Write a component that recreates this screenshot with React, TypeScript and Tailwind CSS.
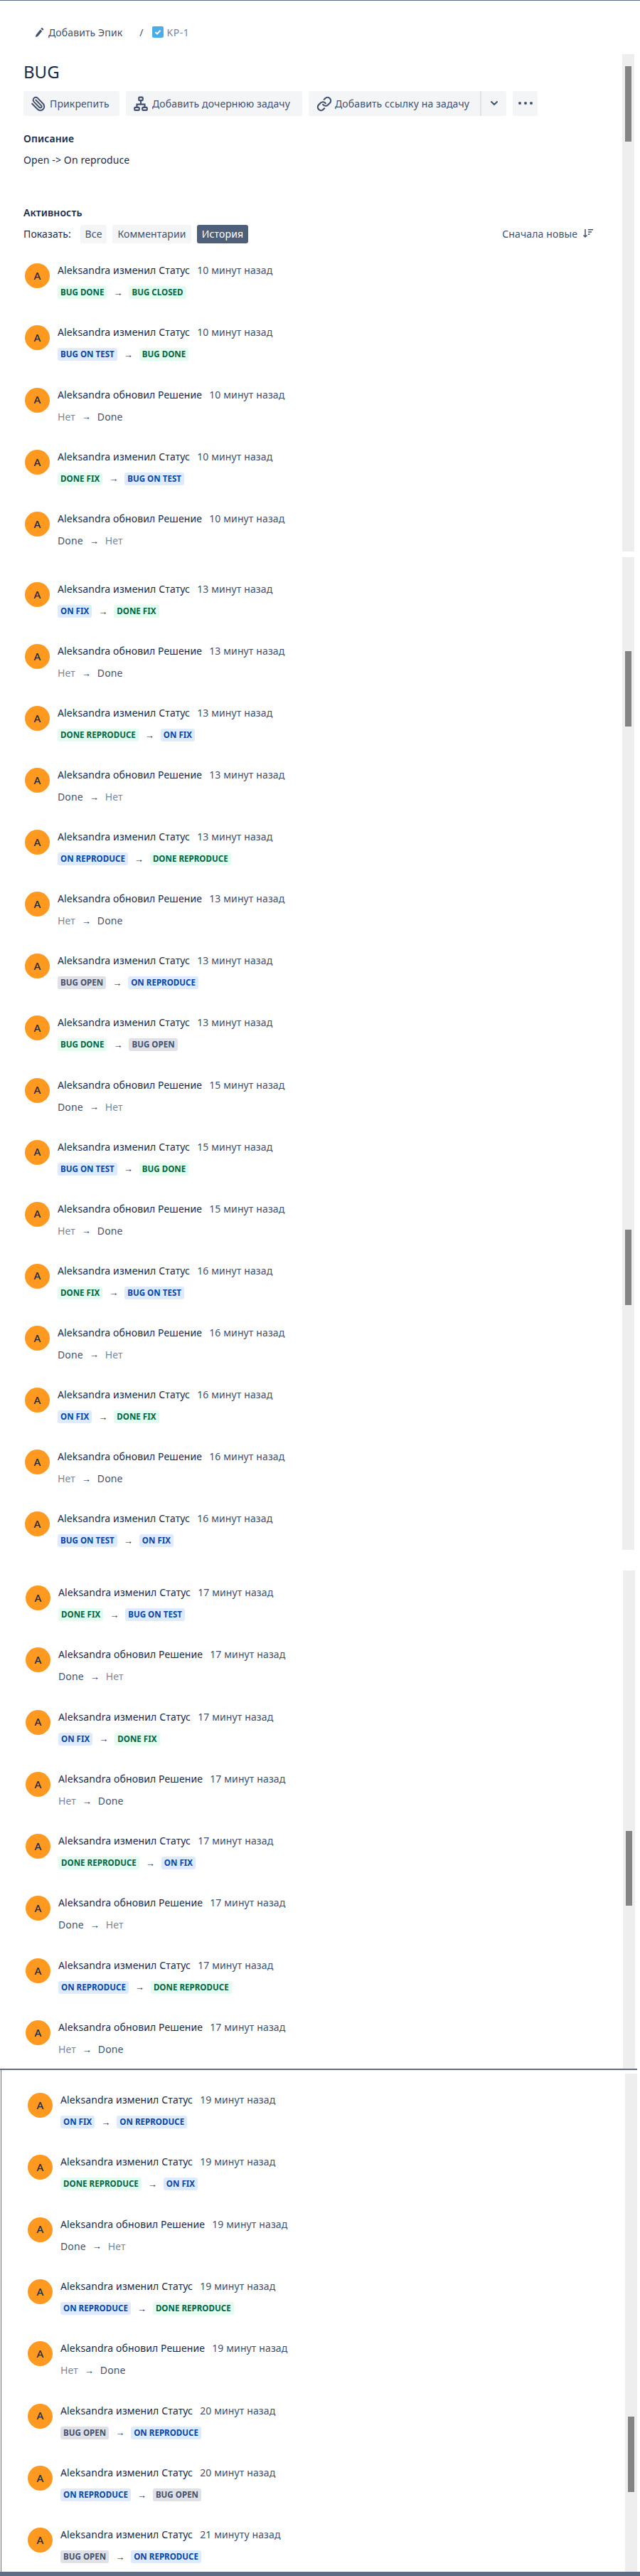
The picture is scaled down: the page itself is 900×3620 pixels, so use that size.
import { ChevronDown, Link, Paperclip } from 'lucide-react'

type Row = { kind: 'status' | 'res'; time: string; from: string; to: string }

const st = (time: string, from: string, to: string): Row => ({ kind: 'status', time, from, to })
const rs = (time: string, from: string, to: string): Row => ({ kind: 'res', time, from, to })

const first: Row[] = [
  st('10 минут назад', 'BUG DONE', 'BUG CLOSED'),
  st('10 минут назад', 'BUG ON TEST', 'BUG DONE'),
  rs('10 минут назад', 'Нет', 'Done'),
  st('10 минут назад', 'DONE FIX', 'BUG ON TEST'),
  rs('10 минут назад', 'Done', 'Нет'),
]

const second: Row[] = [
  st('13 минут назад', 'ON FIX', 'DONE FIX'),
  rs('13 минут назад', 'Нет', 'Done'),
  st('13 минут назад', 'DONE REPRODUCE', 'ON FIX'),
  rs('13 минут назад', 'Done', 'Нет'),
  st('13 минут назад', 'ON REPRODUCE', 'DONE REPRODUCE'),
  rs('13 минут назад', 'Нет', 'Done'),
  st('13 минут назад', 'BUG OPEN', 'ON REPRODUCE'),
  st('13 минут назад', 'BUG DONE', 'BUG OPEN'),
  rs('15 минут назад', 'Done', 'Нет'),
  st('15 минут назад', 'BUG ON TEST', 'BUG DONE'),
  rs('15 минут назад', 'Нет', 'Done'),
  st('16 минут назад', 'DONE FIX', 'BUG ON TEST'),
  rs('16 минут назад', 'Done', 'Нет'),
  st('16 минут назад', 'ON FIX', 'DONE FIX'),
  rs('16 минут назад', 'Нет', 'Done'),
  st('16 минут назад', 'BUG ON TEST', 'ON FIX'),
]

const third: Row[] = [
  st('17 минут назад', 'DONE FIX', 'BUG ON TEST'),
  rs('17 минут назад', 'Done', 'Нет'),
  st('17 минут назад', 'ON FIX', 'DONE FIX'),
  rs('17 минут назад', 'Нет', 'Done'),
  st('17 минут назад', 'DONE REPRODUCE', 'ON FIX'),
  rs('17 минут назад', 'Done', 'Нет'),
  st('17 минут назад', 'ON REPRODUCE', 'DONE REPRODUCE'),
  rs('17 минут назад', 'Нет', 'Done'),
]

const fourth: Row[] = [
  st('19 минут назад', 'ON FIX', 'ON REPRODUCE'),
  st('19 минут назад', 'DONE REPRODUCE', 'ON FIX'),
  rs('19 минут назад', 'Done', 'Нет'),
  st('19 минут назад', 'ON REPRODUCE', 'DONE REPRODUCE'),
  rs('19 минут назад', 'Нет', 'Done'),
  st('20 минут назад', 'BUG OPEN', 'ON REPRODUCE'),
  st('20 минут назад', 'ON REPRODUCE', 'BUG OPEN'),
  st('21 минуту назад', 'BUG OPEN', 'ON REPRODUCE'),
]

function lozengeClass(name: string) {
  if (name === 'BUG OPEN') return 'bg-[#dfe1e6] text-[#42526e]'
  if (name.startsWith('ON') || name === 'BUG ON TEST') return 'bg-[#deebff] text-[#0747a6]'
  return 'bg-[#e3fcef] text-[#006644]'
}

function Lozenge({ name }: { name: string }) {
  return (
    <span className={`h-[18px] px-1 rounded-[3px] text-[11.6px] tracking-normal leading-[18px] font-bold ${lozengeClass(name)}`}>
      {name}
    </span>
  )
}

function Resolution({ value }: { value: string }) {
  return <span className={value === 'Нет' ? 'text-[#7a869a]' : 'text-[#42526e]'}>{value}</span>
}

function HistoryRow({ row }: { row: Row }) {
  return (
    <div className="flex h-[54px] gap-[11px]">
      <div className="w-[35px] h-[35px] rounded-full bg-[#ff991f] flex items-center justify-center text-[15px] font-medium text-[#172b4d]">
        A
      </div>
      <div>
        <div className="h-5 leading-5 text-[#172b4d] whitespace-nowrap">
          Aleksandra {row.kind === 'status' ? 'изменил Статус' : 'обновил Решение'}
          <span className="ml-[10px] text-[#42526e]">{row.time}</span>
        </div>
        <div className="mt-[12px] h-[18px] flex items-center">
          {row.kind === 'status' ? <Lozenge name={row.from} /> : <Resolution value={row.from} />}
          <span className="w-[31px] text-center text-[#172b4d] text-[13px]">→</span>
          {row.kind === 'status' ? <Lozenge name={row.to} /> : <Resolution value={row.to} />}
        </div>
      </div>
    </div>
  )
}

function Track({ children, className = '' }: { children: React.ReactNode; className?: string }) {
  return <aside className={`w-[17px] shrink-0 bg-[#eeeeee] ${className}`}>{children}</aside>
}

function Actions() {
  return (
    <div className="mt-[16px] flex gap-[9px] text-[#42526e]">
      <button className="h-[35px] w-[135px] pl-[10px] flex items-center gap-[5px] bg-[#f4f5f7] rounded-[3px]">
        <Paperclip className="w-[22px] h-[22px] -scale-x-100" strokeWidth={2.2} />
        Прикрепить
      </button>
      <button className="h-[35px] w-[248px] pl-[10px] flex items-center gap-[5px] bg-[#f4f5f7] rounded-[3px]">
        <svg viewBox="0 0 20 20" className="w-[22px] h-[22px]" fill="none" stroke="currentColor" strokeWidth="2">
          <rect x="7.5" y="1.5" width="5" height="4" rx="1" />
          <rect x="2" y="14.5" width="6" height="3.5" rx="1" />
          <rect x="12" y="14.5" width="6" height="3.5" rx="1" />
          <path d="M10 5.5v5M5 14v-3.5h10V14" />
        </svg>
        Добавить дочернюю задачу
      </button>
      <div className="h-[35px] flex bg-[#f4f5f7] rounded-[3px]">
        <button className="w-[243px] pl-[11px] flex items-center gap-[4px] border-r-2 border-[#dfe1e6]">
          <Link className="w-[22px] h-[22px]" strokeWidth={2.4} />
          Добавить ссылку на задачу
        </button>
        <button className="w-[35px] flex items-center justify-center">
          <ChevronDown className="w-4 h-4 -mt-px" strokeWidth={3} />
        </button>
      </div>
      <button className="h-[35px] w-[35px] flex items-center justify-center gap-[4px] bg-[#f4f5f7] rounded-[3px]">
        <span className="w-1 h-1 -mt-px rounded-full bg-[#42526e]" />
        <span className="w-1 h-1 -mt-px rounded-full bg-[#42526e]" />
        <span className="w-1 h-1 -mt-px rounded-full bg-[#42526e]" />
      </button>
    </div>
  )
}

function Header() {
  return (
    <>
      <h1 className="h-[36px] pt-[7px] text-2xl tracking-normal leading-[36px] text-[#172b4d]">BUG</h1>
      <Actions />
      <h2 className="mt-[22px] h-5 leading-5 font-semibold text-[#172b4d]">Описание</h2>
      <p className="mt-[10px] h-5 leading-5 text-[#172b4d]">Open -&gt; On reproduce</p>
      <h2 className="mt-[54px] h-5 leading-5 font-semibold text-[#172b4d]">Активность</h2>
      <div className="mt-[7px] h-[26px] flex items-center text-[#172b4d]">
        <span className="w-[80px]">Показать:</span>
        <button className="w-[37px] h-[26px] bg-[#f4f5f7] rounded-[3px] text-[#42526e]">Все</button>
        <button className="ml-[8px] w-[111px] h-[26px] bg-[#f4f5f7] rounded-[3px] text-[#42526e]">Комментарии</button>
        <button className="ml-[8px] w-[72px] h-[26px] bg-[#505f79] rounded-[3px] text-white">История</button>
        <div className="ml-auto mr-[40px] flex items-center gap-[7px] text-[#42526e]">
          Сначала новые
          <svg viewBox="0 0 16 16" className="w-4 h-4 -mt-[2px]" fill="none" stroke="currentColor" strokeWidth="1.5">
            <path d="M4 2v11M1.5 10.5 4 13l2.5-2.5M8 2.8h7M8 6h5M8 9.2h2.5" />
          </svg>
        </div>
      </div>
    </>
  )
}

export default function App() {
  return (
    <div className="w-[900px] h-[3620px] bg-white text-sm tracking-[0.12px] overflow-hidden font-['Noto_Sans',sans-serif]">
      <div className="h-px bg-[#5e6c84]" />

      <div className="h-[75px] pl-[49px] pt-[35px] flex items-start text-[#42526e]">
        <svg viewBox="0 0 14 16" className="w-[13px] h-[16px] mt-[2px]" fill="currentColor">
          <path d="M1 14.8l.8-3.6 6.4-8 2.8 2.3-6.4 8zM9 2.1l1-1.2c.3-.4.8-.4 1.2-.1l1.7 1.4c.4.3.4.8.1 1.2l-1 1.2z" />
        </svg>
        <span className="ml-[6px] h-5 leading-5">Добавить Эпик</span>
        <span className="ml-[24px] h-5 leading-5">/</span>
        <svg viewBox="0 0 16 16" className="ml-[12px] w-4 h-4 mt-px">
          <rect width="16" height="16" rx="2" fill="#4bade8" />
          <path d="M4.5 8.2 7 10.6l4.5-5" fill="none" stroke="#fff" strokeWidth="2" />
        </svg>
        <span className="ml-[5px] h-5 leading-5 text-[#7a869a] tracking-[0.5px]">KP-1</span>
      </div>

      <section className="flex pr-[8px]">
        <div className="flex-1 pl-[33px]">
          <Header />
          <div className="mt-[28px] pl-[2px] pb-[2px] flex flex-col gap-[33.25px]">
            {first.map((row, i) => (
              <HistoryRow key={i} row={row} />
            ))}
          </div>
        </div>
        <Track>
          <div className="ml-[4px] mt-[17px] w-[9px] h-[106px] bg-[#848484]" />
        </Track>
      </section>

      <section className="mt-[8px] flex pr-[8px]">
        <div className="flex-1 pl-[35px] pt-[35px] flex flex-col gap-[33.07px]">
          {second.map((row, i) => (
            <HistoryRow key={i} row={row} />
          ))}
        </div>
        <Track>
          <div className="ml-[4px] mt-[132px] w-[9px] h-[106px] bg-[#848484]" />
          <div className="ml-[4px] mt-[707px] w-[9px] h-[106px] bg-[#848484]" />
        </Track>
      </section>

      <section className="mt-[29px] flex pr-[7px]">
        <div className="flex-1 pl-[36px] pt-[21px] pb-[14px] flex flex-col gap-[33.3px]">
          {third.map((row, i) => (
            <HistoryRow key={i} row={row} />
          ))}
        </div>
        <Track>
          <div className="ml-[4px] mt-[366px] w-[9px] h-[105px] bg-[#848484]" />
        </Track>
      </section>

      <div className="mr-[4px] h-[2px] bg-[#5e6c84]" />

      <section className="ml-px flex h-[705px] border-l border-[#5e6c84] pr-[4px]">
        <div className="flex-1 pl-[37px] pt-[32px] flex flex-col gap-[33.3px]">
          {fourth.map((row, i) => (
            <HistoryRow key={i} row={row} />
          ))}
        </div>
        <Track className="mt-[5px]">
          <div className="ml-[4px] mt-[482px] w-[9px] h-[106px] bg-[#848484]" />
        </Track>
      </section>

      <div className="h-[6px] bg-[#5e6c84]" />
    </div>
  )
}
